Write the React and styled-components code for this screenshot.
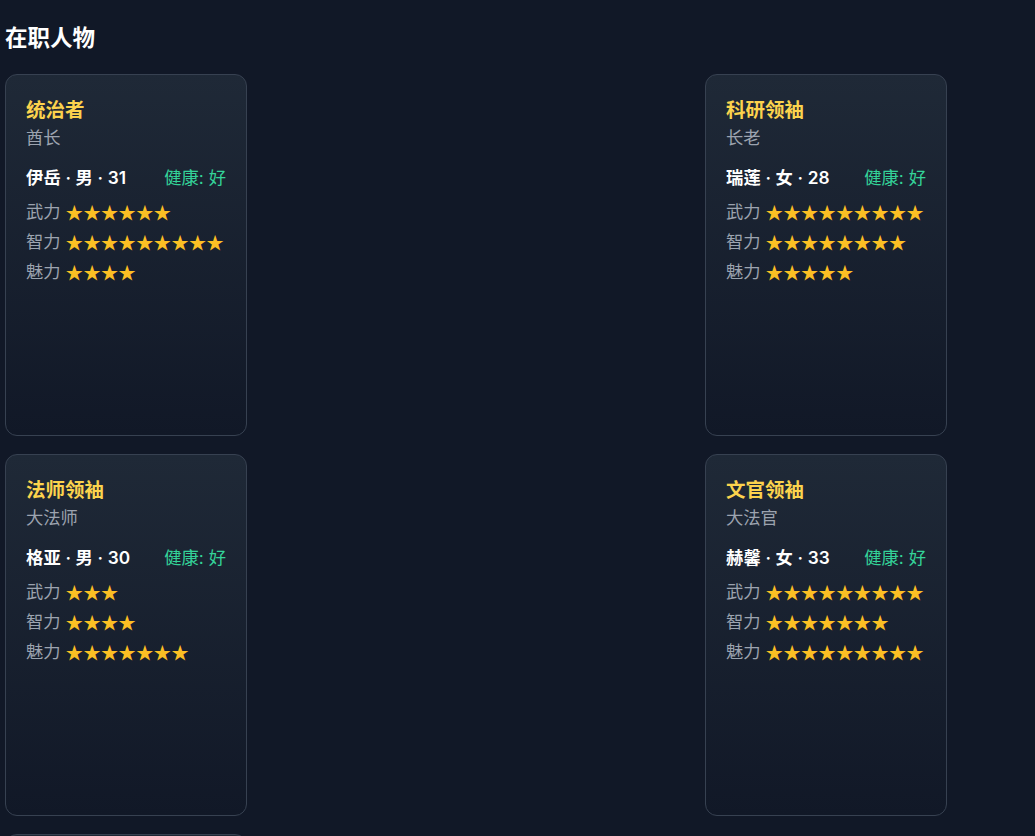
import React from "react";
import styled, { createGlobalStyle } from "styled-components";

const people = [
  {
    role: "统治者",
    title: "酋长",
    name: "伊岳",
    gender: "男",
    age: 31,
    health: "好",
    stats: { 武力: 6, 智力: 9, 魅力: 4 },
  },
  {
    role: "科研领袖",
    title: "长老",
    name: "瑞莲",
    gender: "女",
    age: 28,
    health: "好",
    stats: { 武力: 9, 智力: 8, 魅力: 5 },
  },
  {
    role: "法师领袖",
    title: "大法师",
    name: "格亚",
    gender: "男",
    age: 30,
    health: "好",
    stats: { 武力: 3, 智力: 4, 魅力: 7 },
  },
  {
    role: "文官领袖",
    title: "大法官",
    name: "赫馨",
    gender: "女",
    age: 33,
    health: "好",
    stats: { 武力: 9, 智力: 7, 魅力: 9 },
  },
  {
    role: "军事领袖",
    title: "将军",
    name: "岩拓",
    gender: "男",
    age: 35,
    health: "好",
    stats: { 武力: 8, 智力: 5, 魅力: 6 },
  },
];

const App = () => {
  return (
    <Page>
      <GlobalStyle />
      <Heading>在职人物</Heading>
      <CardGrid>
        {people.map((p) => (
          <Card key={p.name}>
            <Role>{p.role}</Role>
            <Title>{p.title}</Title>
            <InfoRow>
              <Name>
                {p.name} · {p.gender} · {p.age}
              </Name>
              <Health>健康: {p.health}</Health>
            </InfoRow>
            <Stats>
              {Object.entries(p.stats).map(([label, value]) => (
                <StatRow key={label}>
                  <StatLabel>{label}</StatLabel>
                  <Stars>{"★".repeat(value)}</Stars>
                </StatRow>
              ))}
            </Stats>
          </Card>
        ))}
      </CardGrid>
    </Page>
  );
};

export default App;

const GlobalStyle = createGlobalStyle`
  html, body {
    margin: 0;
    background: #111827;
  }
  body {
    font-family: Inter, "Noto Sans CJK SC", sans-serif;
    color: #f9fafb;
  }
`;

const Page = styled.div`
  min-height: 100vh;
  box-sizing: border-box;
  padding: 22px 5px;
  background: #111827;
`;

const Heading = styled.h2`
  margin: 0 0 20px;
  font-size: 22.5px;
  line-height: 32px;
  font-weight: 700;
  color: #ffffff;
`;

const CardGrid = styled.div`
  display: grid;
  grid-template-columns: 242px 242px;
  column-gap: 458px;
  row-gap: 18px;
`;

const Card = styled.div`
  box-sizing: border-box;
  height: 362px;
  padding: 21px 20px 20px;
  border: 1px solid #374151;
  border-radius: 12px;
  background: linear-gradient(to bottom, #1f2937, #111827);
`;

const Role = styled.div`
  font-size: 19.5px;
  line-height: 29px;
  font-weight: 600;
  color: #fcd34d;
`;

const Title = styled.div`
  font-size: 17.3px;
  line-height: 26px;
  color: #9ca3af;
`;

const InfoRow = styled.div`
  display: flex;
  justify-content: space-between;
  align-items: center;
  margin-top: 14px;
  font-size: 17.3px;
  line-height: 26px;
`;

const Name = styled.span`
  font-weight: 600;
  color: #ffffff;
  letter-spacing: 0.15px;
`;

const Health = styled.span`
  color: #34d399;
`;

const Stats = styled.div`
  display: flex;
  flex-direction: column;
  gap: 4px;
  margin-top: 8px;
`;

const StatRow = styled.div`
  display: flex;
  align-items: center;
  gap: 5px;
  font-size: 17.3px;
  line-height: 26px;
`;

const StatLabel = styled.span`
  color: #9ca3af;
`;

const Stars = styled.span`
  font-family: "Noto Sans CJK SC", sans-serif;
  font-size: 17.6px;
  color: #fbbf24;
`;
